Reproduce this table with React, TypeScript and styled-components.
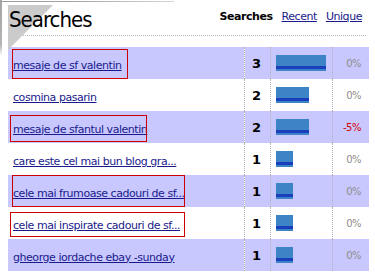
import React from 'react'
import styled, { createGlobalStyle } from 'styled-components'

const GlobalStyle = createGlobalStyle`
  html, body {
    margin: 0;
    padding: 0;
    background: #fff;
  }

  body {
    font-family: "DejaVu Sans", Verdana, sans-serif;
  }
`

const Panel = styled.div`
  position: relative;
  width: 375px;
  height: 278px;
  box-sizing: border-box;
  padding: 0 9px 0 8px;
  overflow: hidden;

  &::before {
    content: '';
    position: absolute;
    left: 0;
    top: 1px;
    width: 174px;
    height: 1px;
    background: linear-gradient(to right, #9a9a9a, #a6a6a6 45%, #d6d6d6);
  }

  &::after {
    content: '';
    position: absolute;
    left: 0;
    top: 0;
    width: 2px;
    height: 56px;
    background: linear-gradient(to bottom, #a4a4a4, #b4b4b4 80%, #fff);
  }
`

const Header = styled.header`
  position: relative;
  height: 35px;
  display: flex;
  align-items: flex-start;
  justify-content: space-between;
  border-bottom: 1px dotted #b4b4b4;
  margin-bottom: 11px;

  &::before {
    content: '';
    position: absolute;
    left: 0;
    top: 5px;
    width: 45px;
    height: 45px;
    background: #cbcbcb;
    clip-path: polygon(0 0, 100% 0, 0 100%);
  }
`

const Title = styled.h1`
  position: relative;
  margin: 0 0 0 1px;
  padding-top: 9px;
  font-family: "DejaVu Sans Condensed", "DejaVu Sans", sans-serif;
  font-size: 22px;
  line-height: 22px;
  font-weight: normal;
  letter-spacing: -1px;
  color: #000;
`

const Nav = styled.nav`
  display: flex;
  gap: 9px;
  margin-right: 4px;
  padding-top: 10px;
  font-size: 11px;
  line-height: 13px;
  letter-spacing: -0.45px;
`

const NavCurrent = styled.span`
  font-weight: bold;
  color: #000;
`

const NavLink = styled.a`
  color: #1a1a8c;
  text-decoration: underline;
`

const Table = styled.table`
  width: 358px;
  border-collapse: collapse;
  table-layout: fixed;
`

const Row = styled.tr<{ $alt: boolean }>`
  height: 32px;
  background: ${p => (p.$alt ? '#c8c8fe' : '#fff')};
`

const QueryCell = styled.td`
  position: relative;
  width: 231px;
  padding: 0 0 0 5px;
  vertical-align: middle;
  white-space: nowrap;
`

const Query = styled.a`
  font-size: 11px;
  line-height: 13px;
  letter-spacing: -0.45px;
  color: #1a1a8c;
  text-decoration: underline;
`

const Flag = styled.span<{ $top: number; $h: number; $left: number; $w: number }>`
  position: absolute;
  top: ${p => p.$top}px;
  left: ${p => p.$left}px;
  width: ${p => p.$w}px;
  height: ${p => p.$h}px;
  box-sizing: border-box;
  border: 1px solid #cc0000;
  pointer-events: none;
`

const CountCell = styled.td`
  width: 16px;
  padding: 0 9px 0 0;
  border-left: 1px dotted #b4b4b4;
  text-align: right;
  vertical-align: middle;
  font-size: 13px;
  line-height: 15px;
  font-weight: bold;
  color: #000;
`

const BarCell = styled.td`
  width: 56px;
  padding: 0 0 0 5px;
  border-left: 1px dotted #b4b4b4;
  vertical-align: middle;
`

const Bar = styled.div`
  height: 16px;
  background: linear-gradient(
    to bottom,
    #3d84c6 0,
    #3d84c6 11px,
    #1a3fbd 11px,
    #1a3fbd 14px,
    #3d84c6 14px
  );
`

const ChangeCell = styled.td<{ $down: boolean }>`
  width: 28px;
  padding: 0 8px 0 0;
  border-left: 1px dotted #b4b4b4;
  text-align: right;
  vertical-align: middle;
  font-size: 10px;
  line-height: 13px;
  letter-spacing: -0.5px;
  color: ${p => (p.$down ? '#d40000' : '#8e8e8e')};
`

type Box = { top: number; h: number; left: number; w: number }

const rows: { q: string; n: number; pct: string; flag?: Box }[] = [
  { q: 'mesaje de sf valentin', n: 3, pct: '0%', flag: { top: 2, h: 30, left: 4, w: 116 } },
  { q: 'cosmina pasarin', n: 2, pct: '0%' },
  { q: 'mesaje de sfantul valentin', n: 2, pct: '-5%', flag: { top: 4, h: 27, left: 2, w: 137 } },
  { q: 'care este cel mai bun blog gra...', n: 1, pct: '0%' },
  { q: 'cele mai frumoase cadouri de sf...', n: 1, pct: '0%', flag: { top: 0, h: 32, left: 4, w: 173 } },
  { q: 'cele mai inspirate cadouri de sf...', n: 1, pct: '0%', flag: { top: 5, h: 25, left: 2, w: 175 } },
  { q: 'gheorge iordache ebay -sunday', n: 1, pct: '0%' },
]

const App = () => {
  return (
    <>
      <GlobalStyle />
      <Panel>
        <Header>
          <Title>Searches</Title>
          <Nav>
            <NavCurrent>Searches</NavCurrent>
            <NavLink href="#">Recent</NavLink>
            <NavLink href="#">Unique</NavLink>
          </Nav>
        </Header>

        <Table>
          <tbody>
            {rows.map((r, i) => (
              <Row key={r.q} $alt={i % 2 === 0}>
                <QueryCell>
                  <Query href="#">{r.q}</Query>
                  {r.flag && (
                    <Flag $top={r.flag.top} $h={r.flag.h} $left={r.flag.left} $w={r.flag.w} />
                  )}
                </QueryCell>
                <CountCell>{r.n}</CountCell>
                <BarCell>
                  <Bar style={{ width: Math.round(r.n * 16.7) }} />
                </BarCell>
                <ChangeCell $down={r.pct.startsWith('-')}>{r.pct}</ChangeCell>
              </Row>
            ))}
          </tbody>
        </Table>
      </Panel>
    </>
  )
}

export default App
